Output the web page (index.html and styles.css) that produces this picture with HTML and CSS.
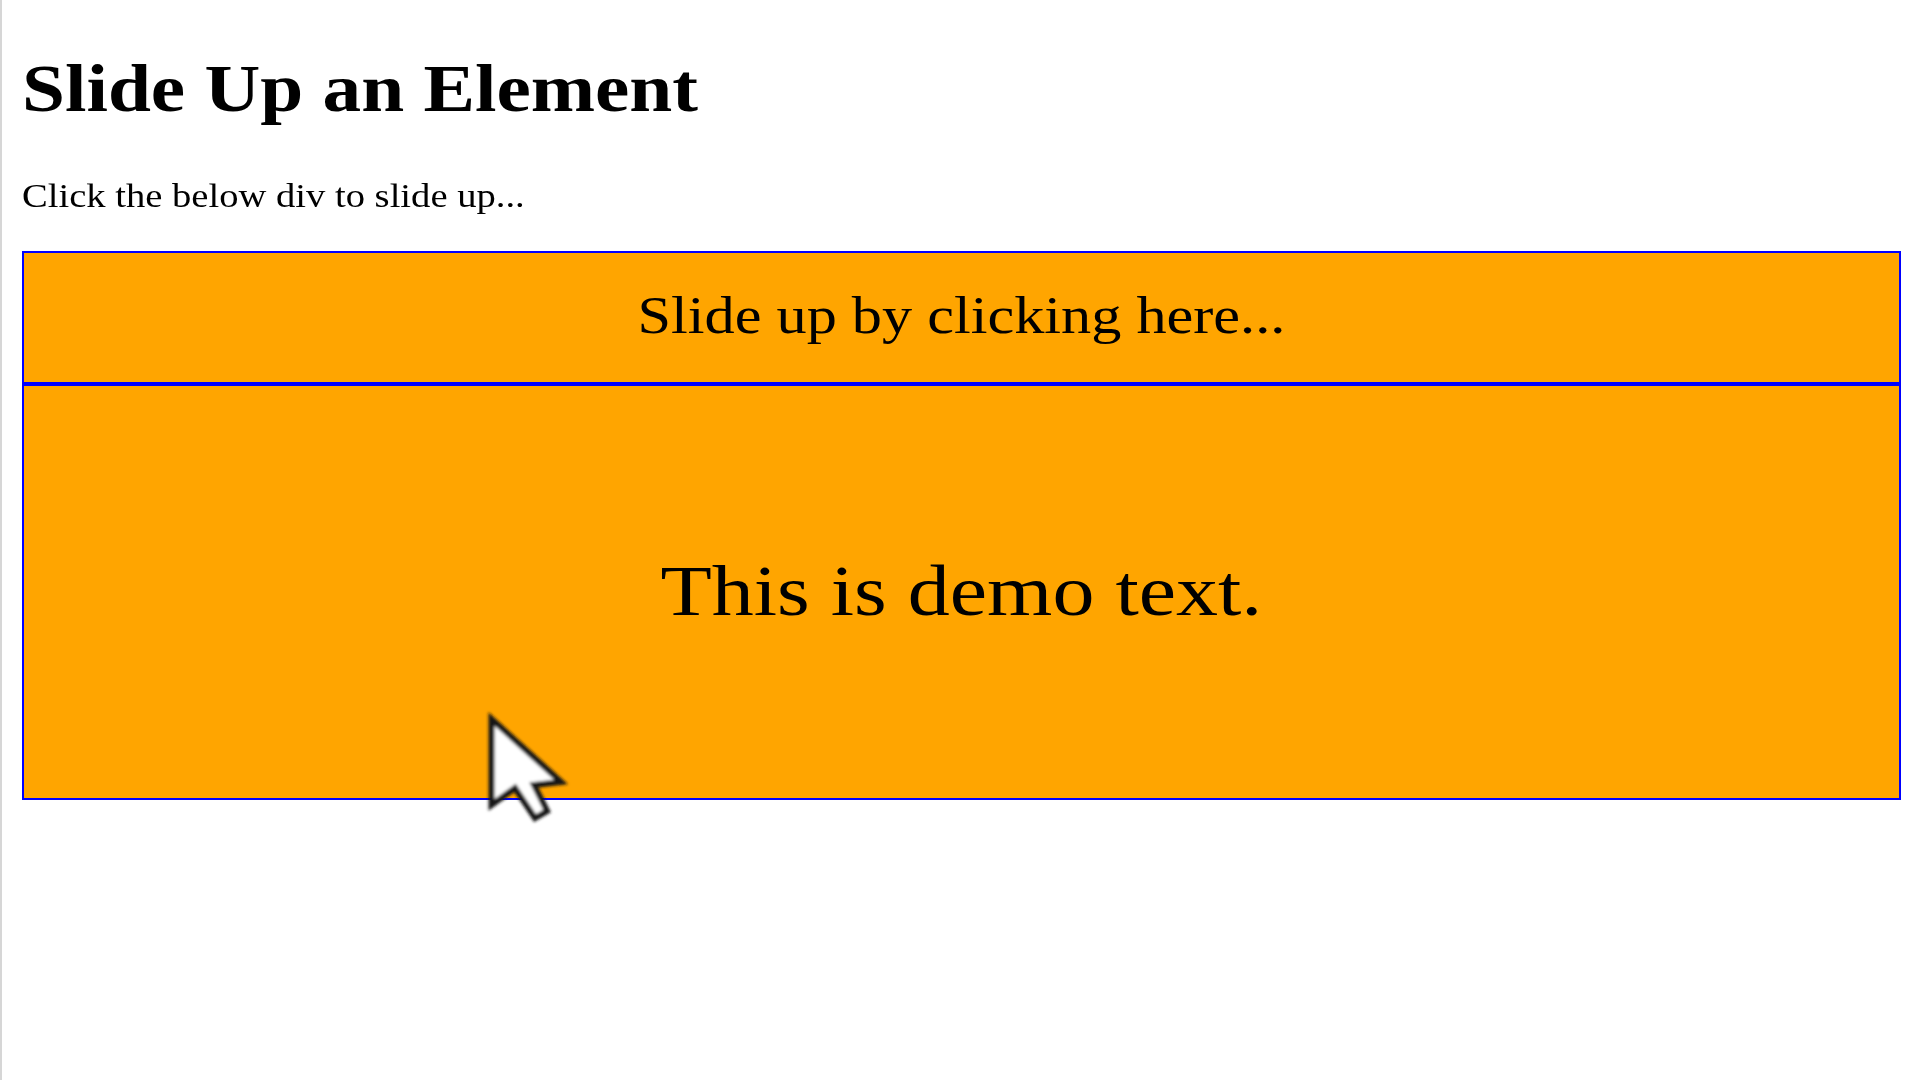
FILE: index.html
```html
<!DOCTYPE html>
<html lang="en">
<head>
<meta charset="utf-8">
<title>Slide Up an Element</title>
<link rel="stylesheet" href="styles.css">
</head>
<body>
  <h1 class="title"><span class="stretch stretch-left s-h1">Slide Up an Element</span></h1>
  <p class="intro"><span class="stretch stretch-left s-p">Click the below div to slide up...</span></p>
  <div class="flip"><span class="stretch s-flip">Slide up by clicking here...</span></div>
  <div class="panel"><span class="stretch s-panel">This is demo text.</span></div>

  <svg class="cursor" width="95" height="120" viewBox="-5 -5 95 120" aria-hidden="true">
    <defs>
      <filter id="soft" x="-20%" y="-20%" width="140%" height="140%">
        <feGaussianBlur stdDeviation="1.4"/>
      </filter>
    </defs>
    <path filter="url(#soft)" d="M2.5,4 L2.5,90 L26,73 L46,103 L58,96 L45,70 L72,67 Z"
          fill="#ffffff" stroke="#151515" stroke-width="6" stroke-linejoin="miter"/>
  </svg>
</body>
</html>
```

FILE: styles.css
```css
html {
  background: #ffffff;
}

body {
  margin: 0;
  padding: 0 19px 0 20px;
  border-left: 2px solid #d6d6d6;
  min-height: 1080px;
  box-sizing: border-box;
  background: #ffffff;
  font-family: "Liberation Serif", "Times New Roman", serif;
  color: #000000;
  position: relative;
}

.title {
  margin: 0;
  padding-top: 49px;
  font-size: 68px;
  line-height: 78px;
  font-weight: bold;
}

.intro {
  margin: 49px 0 0;
  font-size: 34px;
  line-height: 39px;
}

.flip {
  margin-top: 36px;
  padding: 33px 0 36px;
  border: 2px solid #0000ff;
  background: #ffa500;
  text-align: center;
  font-size: 52px;
  line-height: 60px;
}

.panel {
  padding: 164px 0 166px;
  border: 2px solid #0000ff;
  background: #ffa500;
  text-align: center;
  font-size: 71px;
  line-height: 82px;
}

.stretch {
  display: inline-block;
  white-space: nowrap;
  transform-origin: center center;
}

.stretch-left {
  transform-origin: left center;
}

.s-h1 { transform: scaleX(1.136); }
.s-p { transform: scaleX(1.135); }
.s-flip { transform: scaleX(1.159); }
.s-panel { transform: scaleX(1.183); }

.cursor {
  position: absolute;
  left: 482px;
  top: 710px;
}
```
